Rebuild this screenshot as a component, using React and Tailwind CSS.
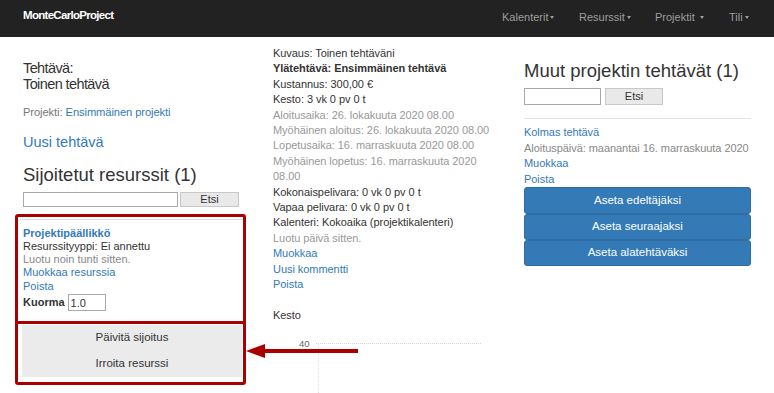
import React from "react";

const NAV = [
  { label: "Kalenterit", w: "w-[77px]", gap: "ml-[2px]" },
  { label: "Resurssit", w: "w-[76px]", gap: "ml-[2px]" },
  { label: "Projektit", w: "w-[74px]", gap: "ml-[5px]" },
  { label: "Tili", w: "w-[22px]", gap: "ml-[2px]" },
];

function Caret({ className }) {
  return (
    <span
      className={`inline-block w-0 h-0 border-x-[2.5px] border-t-[3px] border-x-transparent border-t-[#9d9d9d] ${className}`}
    />
  );
}

function Navbar() {
  return (
    <div className="h-[37px] bg-[#222] flex items-start px-[23px]">
      <div className="pt-[8px] leading-[14px] text-[11.5px] font-bold text-white tracking-[-0.7px]">
        MonteCarloProject
      </div>
      <div className="ml-auto flex pt-[10px] leading-[14px] text-[11px] text-[#9d9d9d]">
        {NAV.map((n) => (
          <div key={n.label} className={`${n.w} flex items-center`}>
            <span>{n.label}</span>
            <Caret className={`${n.gap} mt-[1px]`} />
          </div>
        ))}
      </div>
    </div>
  );
}

function SearchRow({ inputW, h, btnW, gap }) {
  return (
    <div className="flex">
      <input
        className={`${inputW} ${h} border border-[#a9a9a9] bg-white outline-none`}
        defaultValue=""
      />
      <button className={`${btnW} ${h} ${gap} border border-[#c8c8c8] bg-[#e9e9e9] text-[11px] text-[#333] leading-none`}>
        Etsi
      </button>
    </div>
  );
}

function LeftColumn() {
  return (
    <div className="w-[250px] pt-[23px]">
      <div className="text-[14.5px] leading-[16px] text-[#333] tracking-[-0.6px]">
        <div>Tehtävä:</div>
        <div>Toinen tehtävä</div>
      </div>
      <div className="mt-[13px] text-[11.2px] leading-[15.6px] tracking-[-0.1px]">
        <span className="text-[#777]">Projekti: </span>
        <span className="text-[#337ab7]">Ensimmäinen projekti</span>
      </div>
      <div className="mt-[13px] text-[14.5px] leading-[16px] text-[#337ab7]">Uusi tehtävä</div>
      <div className="mt-[15px] text-[18.5px] leading-[20px] text-[#333]">Sijoitetut resurssit (1)</div>
      <div className="mt-[7px]">
        <SearchRow inputW="w-[155px]" h="h-[15px]" btnW="w-[59px]" gap="ml-[2px]" />
      </div>

      <div className="mt-[7px] -ml-[8px] w-[231px] border-[3px] border-[#a00] rounded-[3px]">
        <div className="pt-[2px] pb-[10px]">
          <div className="ml-[2px] border-t border-[#ddd]" />
          <div className="pl-[5px] pt-[7px] text-[11px] leading-[13.3px] text-[#333]">
            <div className="font-bold text-[#337ab7]">Projektipäällikkö</div>
            <div>Resurssityyppi: Ei annettu</div>
            <div className="text-[#888]">Luotu noin tunti sitten.</div>
            <div className="text-[#337ab7]">Muokkaa resurssia</div>
            <div className="text-[#337ab7]">Poista</div>
            <div className="flex items-center mt-[1px]">
              <span className="font-bold">Kuorma</span>
              <input
                className="ml-[3px] w-[38px] h-[17px] border border-[#a9a9a9] px-[2px] text-[11px] text-[#333] outline-none"
                defaultValue="1.0"
              />
            </div>
          </div>
        </div>
        <div className="border-t-[3px] border-[#a00] pt-[1px] pb-[5px] pl-[4px] pr-[1px]">
          <div className="h-[26px] bg-[#ebebeb] flex items-center justify-center text-[11.5px] text-[#333]">
            Päivitä sijoitus
          </div>
          <div className="h-[26px] bg-[#ebebeb] flex items-center justify-center text-[11.5px] text-[#333]">
            Irroita resurssi
          </div>
        </div>
      </div>
    </div>
  );
}

function MiddleColumn() {
  const dark = "text-[#333]";
  const muted = "text-[#999]";
  const link = "text-[#337ab7]";
  return (
    <div className="w-[251px] pt-[9px]">
      <div className="w-[226px] text-[11px] leading-[15.4px] tracking-[-0.05px]">
        <div className={dark}>Kuvaus: Toinen tehtäväni</div>
        <div className={`${dark} font-bold`}>Ylätehtävä: Ensimmäinen tehtävä</div>
        <div className={dark}>Kustannus: 300,00 €</div>
        <div className={dark}>Kesto: 3 vk 0 pv 0 t</div>
        <div className={muted}>Aloitusaika: 26. lokakuuta 2020 08.00</div>
        <div className={muted}>Myöhäinen aloitus: 26. lokakuuta 2020 08.00</div>
        <div className={muted}>Lopetusaika: 16. marraskuuta 2020 08.00</div>
        <div className={muted}>Myöhäinen lopetus: 16. marraskuuta 2020 08.00</div>
        <div className={dark}>Kokonaispelivara: 0 vk 0 pv 0 t</div>
        <div className={dark}>Vapaa pelivara: 0 vk 0 pv 0 t</div>
        <div className={dark}>Kalenteri: Kokoaika (projektikalenteri)</div>
        <div className={muted}>Luotu päivä sitten.</div>
        <div className={link}>Muokkaa</div>
        <div className={link}>Uusi kommentti</div>
        <div className={link}>Poista</div>
        <div className={`${dark} mt-[15.4px]`}>Kesto</div>
      </div>
      <svg width="251" height="70" className="block">
        <text x="26" y="23.5" fontSize="9.5" fill="#666" fontFamily="Liberation Sans, Arial, sans-serif">
          40
        </text>
        <line x1="43" y1="20.5" x2="208" y2="20.5" stroke="#d6d6d6" strokeDasharray="1 1" />
        <line x1="45.5" y1="21" x2="45.5" y2="70" stroke="#e0e0e0" strokeDasharray="1 1" />
      </svg>
    </div>
  );
}

function RightColumn() {
  return (
    <div className="w-[228px] pt-[24px]">
      <div className="text-[18.5px] leading-[20px] text-[#333]">Muut projektin tehtävät (1)</div>
      <div className="mt-[7px]">
        <SearchRow inputW="w-[77px]" h="h-[17px]" btnW="w-[58px]" gap="ml-[4px]" />
      </div>
      <div className="mt-[12.5px] border-t border-[#e5e5e5] w-[227px]" />
      <div className="mt-[6.5px] text-[11px] leading-[15.6px] tracking-[-0.05px]">
        <div className="text-[#337ab7]">Kolmas tehtävä</div>
        <div className="text-[#888]">Aloituspäivä: maanantai 16. marraskuuta 2020</div>
        <div className="text-[#337ab7]">Muokkaa</div>
        <div className="text-[#337ab7]">Poista</div>
      </div>
      <div className="w-[227px] flex flex-col">
        {["Aseta edeltäjäksi", "Aseta seuraajaksi", "Aseta alatehtäväksi"].map((t) => (
          <button
            key={t}
            className="h-[26.2px] bg-[#337ab7] border border-[#2e6da4] rounded-[3px] text-white text-[11.5px] leading-none"
          >
            {t}
          </button>
        ))}
      </div>
    </div>
  );
}

export default function App() {
  return (
    <div className="relative w-[774px] h-[393px] overflow-hidden bg-white font-['Liberation_Sans',Arial,sans-serif]">
      <Navbar />
      <div className="flex pl-[23px]">
        <LeftColumn />
        <MiddleColumn />
        <RightColumn />
      </div>
      {/* annotation arrow */}
      <svg className="absolute left-[246px] top-[343px]" width="112" height="16">
        <polygon points="0,8 19,1 19,15" fill="#a00" />
        <rect x="18" y="6" width="94" height="4" fill="#a00" />
      </svg>
    </div>
  );
}
